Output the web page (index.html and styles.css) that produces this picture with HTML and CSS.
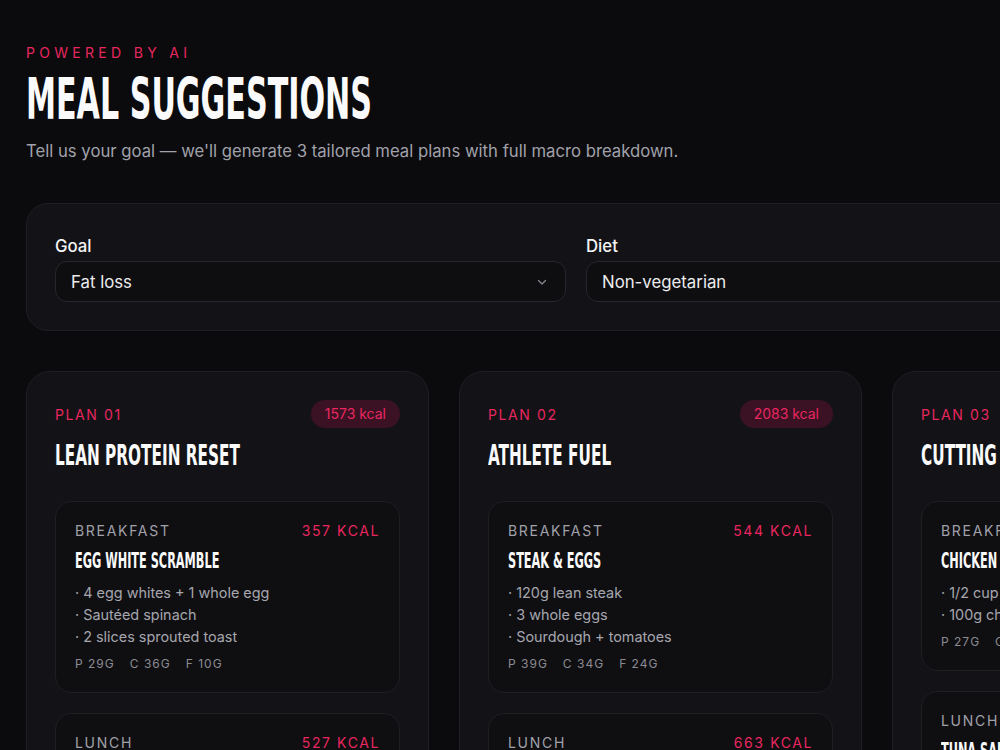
FILE: index.html
```html
<!DOCTYPE html>
<html lang="en">
<head>
  <meta charset="UTF-8" />
  <meta name="viewport" content="width=device-width, initial-scale=1.0" />
  <title>Meal Suggestions</title>
  <link rel="stylesheet" href="styles.css">
</head>
<body>
  <main class="page">

    <header class="intro">
      <p class="eyebrow">Powered by AI</p>
      <h1 class="title">Meal Suggestions</h1>
      <p class="lead">Tell us your goal — we'll generate 3 tailored meal plans with full macro breakdown.</p>
    </header>

    <!-- goal / diet picker -->
    <section class="filters">
      <div class="field">
        <label for="goal">Goal</label>
        <div class="select">
          <span>Fat loss</span>
          <svg class="chevron" viewBox="0 0 12 12" width="12" height="12"><path d="M2.5 4.5 6 8l3.5-3.5" fill="none" stroke="currentColor" stroke-width="1.3" stroke-linecap="round" stroke-linejoin="round"/></svg>
        </div>
      </div>
      <div class="field">
        <label for="diet">Diet</label>
        <div class="select">
          <span>Non-vegetarian</span>
          <svg class="chevron" viewBox="0 0 12 12" width="12" height="12"><path d="M2.5 4.5 6 8l3.5-3.5" fill="none" stroke="currentColor" stroke-width="1.3" stroke-linecap="round" stroke-linejoin="round"/></svg>
        </div>
      </div>
      <button class="generate">Generate</button>
    </section>

    <section class="plans">

      <article class="plan">
        <div class="plan-head">
          <span class="plan-no">Plan 01</span>
          <span class="pill">1573 kcal</span>
        </div>
        <h2 class="plan-name">Lean Protein Reset</h2>
        <div class="meals">
          <div class="meal">
            <div class="meal-head"><span class="meal-type">Breakfast</span><span class="meal-kcal">357 kcal</span></div>
            <h3 class="meal-name">Egg White Scramble</h3>
            <ul class="items">
              <li>4 egg whites + 1 whole egg</li>
              <li>Sautéed spinach</li>
              <li>2 slices sprouted toast</li>
            </ul>
            <div class="macros"><span>P 29g</span><span>C 36g</span><span>F 10g</span></div>
          </div>
          <div class="meal">
            <div class="meal-head"><span class="meal-type">Lunch</span><span class="meal-kcal">527 kcal</span></div>
            <h3 class="meal-name">Grilled Chicken Bowl</h3>
            <ul class="items">
              <li>150g chicken breast</li>
              <li>1 cup brown rice</li>
              <li>Roasted broccoli</li>
            </ul>
            <div class="macros"><span>P 48g</span><span>C 52g</span><span>F 12g</span></div>
          </div>
        </div>
      </article>

      <article class="plan">
        <div class="plan-head">
          <span class="plan-no">Plan 02</span>
          <span class="pill">2083 kcal</span>
        </div>
        <h2 class="plan-name">Athlete Fuel</h2>
        <div class="meals">
          <div class="meal">
            <div class="meal-head"><span class="meal-type">Breakfast</span><span class="meal-kcal">544 kcal</span></div>
            <h3 class="meal-name">Steak &amp; Eggs</h3>
            <ul class="items">
              <li>120g lean steak</li>
              <li>3 whole eggs</li>
              <li>Sourdough + tomatoes</li>
            </ul>
            <div class="macros"><span>P 39g</span><span>C 34g</span><span>F 24g</span></div>
          </div>
          <div class="meal">
            <div class="meal-head"><span class="meal-type">Lunch</span><span class="meal-kcal">663 kcal</span></div>
            <h3 class="meal-name">Salmon Power Plate</h3>
            <ul class="items">
              <li>180g salmon fillet</li>
              <li>Sweet potato mash</li>
              <li>Avocado salad</li>
            </ul>
            <div class="macros"><span>P 44g</span><span>C 58g</span><span>F 26g</span></div>
          </div>
        </div>
      </article>

      <article class="plan">
        <div class="plan-head">
          <span class="plan-no">Plan 03</span>
          <span class="pill">1412 kcal</span>
        </div>
        <h2 class="plan-name">Cutting Phase</h2>
        <div class="meals">
          <div class="meal">
            <div class="meal-head"><span class="meal-type">Breakfast</span><span class="meal-kcal">318 kcal</span></div>
            <h3 class="meal-name">Chicken Oat Bowl</h3>
            <ul class="items">
              <li>1/2 cup rolled oats</li>
              <li>100g chicken breast</li>
            </ul>
            <div class="macros"><span>P 27g</span><span>C 31g</span><span>F 8g</span></div>
          </div>
          <div class="meal">
            <div class="meal-head"><span class="meal-type">Lunch</span><span class="meal-kcal">446 kcal</span></div>
            <h3 class="meal-name">Tuna Salad Wrap</h3>
            <ul class="items">
              <li>1 can tuna in water</li>
              <li>Whole wheat wrap</li>
            </ul>
            <div class="macros"><span>P 38g</span><span>C 34g</span><span>F 11g</span></div>
          </div>
        </div>
      </article>

    </section>
  </main>
</body>
</html>
```

FILE: styles.css
```css
body {
  margin: 0;
  background: #0b0b0e;
  color: #f4f4f5;
  font-family: Inter, 'Noto Sans', sans-serif;
  overflow-x: hidden;
}

.page {
  width: 1269px;
  padding: 44px 26px 60px;
}

/* tall, narrow display headings: condensed bold squeezed a bit more */
.title,
.plan-name,
.meal-name {
  font-family: 'DejaVu Sans Condensed', 'DejaVu Sans', sans-serif;
  font-stretch: condensed;
  font-weight: 700;
  text-transform: uppercase;
  margin: 0;
  color: #fafafa;
  transform: scaleX(0.59);
  transform-origin: left center;
  white-space: nowrap;
}

.eyebrow {
  margin: 0;
  font-size: 14px;
  line-height: 18px;
  letter-spacing: 4.3px;
  text-transform: uppercase;
  color: #e8265f;
}

.title {
  margin-top: 8px;
  font-size: 57.6px;
  line-height: 60px;
  transform: scaleX(0.582);
}

.lead {
  margin: 9px 0 0;
  font-size: 16.7px;
  line-height: 24px;
  color: #a1a1aa;
}

/* filter card */
.filters {
  margin-top: 40px;
  display: flex;
  align-items: flex-end;
  gap: 20px;
  padding: 31px 28px 28px;
  background: #131317;
  border: 1px solid #1e1e23;
  border-radius: 22px;
}

.field {
  flex: 1;
}

.field label {
  display: block;
  font-size: 16.8px;
  font-weight: 500;
  line-height: 22px;
  margin-bottom: 4px;
  color: #f4f4f5;
}

.select {
  display: flex;
  align-items: center;
  justify-content: space-between;
  height: 41px;
  box-sizing: border-box;
  padding: 0 17px 0 15px;
  background: #0e0e11;
  border: 1px solid #26262c;
  border-radius: 12px;
  font-size: 16.8px;
  color: #ececee;
}

.chevron {
  color: #85858d;
}

.generate {
  width: 149px;
  height: 41px;
  border: none;
  border-radius: 12px;
  background: #e8265f;
  color: #fff;
  font-family: inherit;
  font-size: 15px;
  font-weight: 600;
}

/* plan columns */
.plans {
  margin-top: 40px;
  display: grid;
  grid-template-columns: repeat(3, minmax(0, 1fr));
  gap: 30px;
}

.plan {
  padding: 28px;
  background: #131317;
  border: 1px solid #1e1e23;
  border-radius: 24px;
}

.plan-head {
  display: flex;
  justify-content: space-between;
  align-items: center;
}

.plan-no {
  font-size: 14px;
  letter-spacing: 1.6px;
  text-transform: uppercase;
  color: #e8265f;
}

.pill {
  padding: 0 14px;
  line-height: 28px;
  border-radius: 14px;
  background: #3a1224;
  color: #e8265f;
  font-size: 14px;
}

.plan-name {
  margin-top: 11px;
  font-size: 28.8px;
  line-height: 32px;
}

.meals {
  margin-top: 30px;
  display: flex;
  flex-direction: column;
  gap: 20px;
}

.meal {
  padding: 20px 19px;
  background: #0f0f12;
  border: 1px solid #1e1e23;
  border-radius: 16px;
}

.meal-head {
  display: flex;
  justify-content: space-between;
  font-size: 14px;
  line-height: 18px;
  letter-spacing: 1.7px;
  text-transform: uppercase;
}

.meal-type {
  color: #a1a1aa;
}

.meal-kcal {
  color: #e8265f;
  letter-spacing: 1.6px;
}

.meal-name {
  margin-top: 7px;
  font-size: 20.6px;
  line-height: 28px;
  transform: scaleX(0.61);
}

.items {
  list-style: none;
  margin: 7px 0 0;
  padding: 0;
  font-size: 14.4px;
  line-height: 22px;
  color: #a6a6ae;
}

.items li::before {
  content: "· ";
}

.macros {
  margin-top: 8px;
  display: flex;
  gap: 15px;
  font-size: 12px;
  line-height: 16px;
  letter-spacing: 1px;
  text-transform: uppercase;
  color: #8b8b93;
}
```
